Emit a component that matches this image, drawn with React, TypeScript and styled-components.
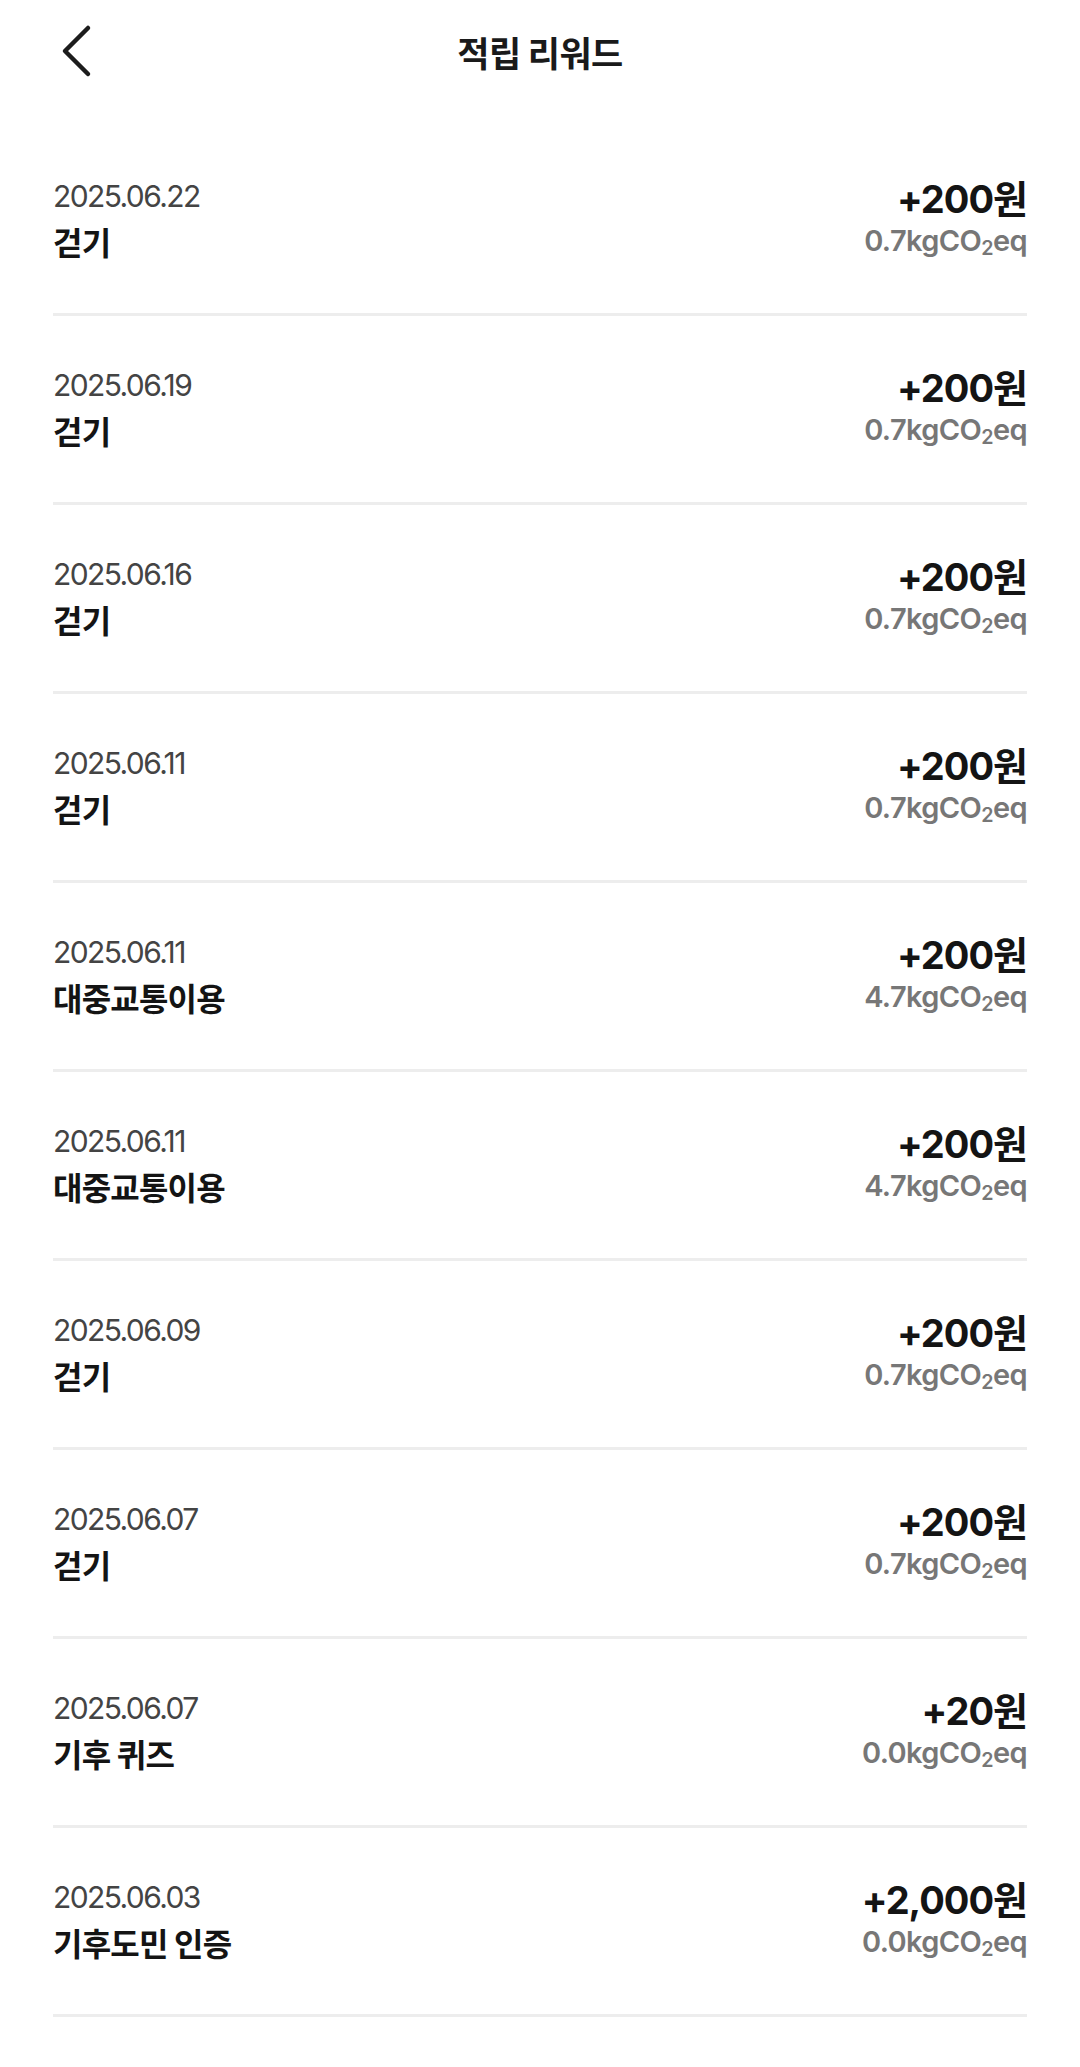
import React from "react";
import styled, { createGlobalStyle } from "styled-components";

const GlobalStyle = createGlobalStyle`
  html, body {
    margin: 0;
    padding: 0;
    background: #ffffff;
  }
  body {
    font-family: Inter, "Noto Sans CJK KR", "Noto Sans", sans-serif;
    color: #111111;
    -webkit-font-smoothing: antialiased;
  }
`;

const Page = styled.div`
  width: 1080px;
  min-height: 2067px;
  background: #ffffff;
  display: flex;
  flex-direction: column;
`;

const Header = styled.header`
  position: relative;
  height: 104px;
  display: flex;
  align-items: center;
  justify-content: center;
`;

const BackButton = styled.button`
  position: absolute;
  left: 52px;
  top: 22px;
  width: 56px;
  height: 58px;
  padding: 0;
  border: 0;
  background: transparent;
  display: flex;
  align-items: center;
  justify-content: center;
  cursor: pointer;
`;

const Title = styled.h1`
  margin: 0;
  font-family: "Noto Sans CJK KR", sans-serif;
  font-size: 35px;
  line-height: 44px;
  font-weight: 700;
  letter-spacing: -0.6px;
  color: #1a1a1a;
`;

const List = styled.ul`
  list-style: none;
  margin: 0;
  padding: 23px 53px 0 53px;
`;

const Row = styled.li`
  height: 189px;
  box-sizing: border-box;
  padding-top: 50px;
  border-bottom: 3px solid #ededed;
  display: flex;
  justify-content: space-between;
  align-items: flex-start;
`;

const Left = styled.div`
  display: flex;
  flex-direction: column;
  gap: 6px;
`;

const Right = styled.div`
  display: flex;
  flex-direction: column;
  align-items: flex-end;
  gap: 4px;
`;

const DateText = styled.span`
  font-family: Inter, "Noto Sans CJK KR", sans-serif;
  font-size: 30px;
  line-height: 38px;
  font-weight: 400;
  letter-spacing: -1.6px;
  color: #444444;
`;

const Label = styled.span`
  font-family: "Noto Sans CJK KR", sans-serif;
  font-size: 32px;
  line-height: 40px;
  font-weight: 700;
  letter-spacing: -0.8px;
  color: #141414;
`;

const Amount = styled.span`
  font-family: Inter, "Noto Sans CJK KR", sans-serif;
  font-size: 38px;
  line-height: 44px;
  font-weight: 700;
  letter-spacing: -1px;
  color: #141414;
`;

const Carbon = styled.span`
  font-family: Inter, "Noto Sans CJK KR", sans-serif;
  font-size: 29px;
  line-height: 32px;
  font-weight: 600;
  letter-spacing: -0.6px;
  color: #777777;
`;

const Sub = styled.span`
  font-size: 0.68em;
  vertical-align: -0.18em;
  line-height: 0;
`;

type Reward = { date: string; label: string; amount: string; co2: string };

const rewards: Reward[] = [
  { date: "2025.06.22", label: "걷기", amount: "+200원", co2: "0.7" },
  { date: "2025.06.19", label: "걷기", amount: "+200원", co2: "0.7" },
  { date: "2025.06.16", label: "걷기", amount: "+200원", co2: "0.7" },
  { date: "2025.06.11", label: "걷기", amount: "+200원", co2: "0.7" },
  { date: "2025.06.11", label: "대중교통이용", amount: "+200원", co2: "4.7" },
  { date: "2025.06.11", label: "대중교통이용", amount: "+200원", co2: "4.7" },
  { date: "2025.06.09", label: "걷기", amount: "+200원", co2: "0.7" },
  { date: "2025.06.07", label: "걷기", amount: "+200원", co2: "0.7" },
  { date: "2025.06.07", label: "기후 퀴즈", amount: "+20원", co2: "0.0" },
  { date: "2025.06.03", label: "기후도민 인증", amount: "+2,000원", co2: "0.0" },
];

const ChevronLeft = () => (
  <svg width="40" height="56" viewBox="0 0 40 56" fill="none">
    <polyline
      points="28,5 5,28 28,51"
      stroke="#1c1c1c"
      strokeWidth="4.5"
      strokeLinecap="round"
      strokeLinejoin="round"
    />
  </svg>
);

export default function App() {
  return (
    <Page>
      <GlobalStyle />
      <Header>
        <BackButton aria-label="뒤로">
          <ChevronLeft />
        </BackButton>
        <Title>적립 리워드</Title>
      </Header>
      <List>
        {rewards.map((r, i) => (
          <Row key={i}>
            <Left>
              <DateText>{r.date}</DateText>
              <Label>{r.label}</Label>
            </Left>
            <Right>
              <Amount>{r.amount}</Amount>
              <Carbon>
                {r.co2}kgCO<Sub>2</Sub>eq
              </Carbon>
            </Right>
          </Row>
        ))}
      </List>
    </Page>
  );
}
